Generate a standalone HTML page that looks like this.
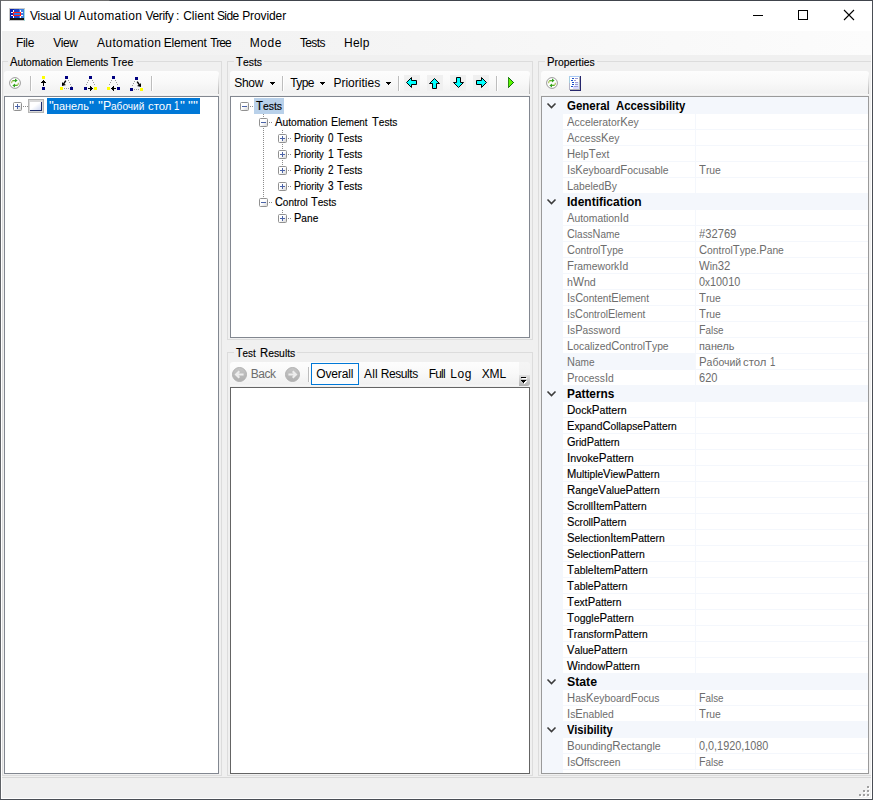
<!DOCTYPE html>
<html lang="en"><head><meta charset="utf-8"><title>Visual UI Automation Verify : Client Side Provider</title>
<style>
html,body{margin:0;padding:0}
body{width:873px;height:800px;overflow:hidden;position:relative;background:#f0f0f0;font-family:"Liberation Sans",sans-serif;font-size:11px;color:#000}
div,span,svg{position:absolute;box-sizing:content-box}
svg{overflow:visible}
.t{white-space:pre;line-height:16px;height:16px;font-size:12px;transform-origin:0 0}
.k{-webkit-text-stroke:0.15px}
.l{left:0;top:0}
.t .c{position:static;font-size:12px}
.gb{border:1px solid #dcdcdc}
.tb{background:linear-gradient(#fdfdfd 0%,#f9f9f9 45%,#f1f1f1 92%,#f8f8f8 100%);border-radius:3px 3px 0 0}
.tbe{width:1px;background:linear-gradient(rgba(176,176,176,0),#b4b4b4)}
.pane{border:1px solid #828790;background:#fff}
.sep{width:1px;height:15px;background:#bdbdbd;box-shadow:1px 0 0 #fff}
.eb{width:7px;height:7px;border:1px solid #919191;border-radius:1.5px;background:linear-gradient(135deg,#fff 45%,#d6d6d6)}
.eb i{position:absolute;left:1px;top:3px;width:5px;height:1px;background:#4b63a7}
.eb b{position:absolute;left:3px;top:1px;width:1px;height:5px;background:#4b63a7}
.hd{height:1px;background:repeating-linear-gradient(to right,#8c8c8c 0 1px,transparent 1px 2px)}
.vd{width:1px;background:repeating-linear-gradient(to bottom,#8c8c8c 0 1px,transparent 1px 2px)}
</style></head>
<body>
<div style="left:0px;top:0px;width:873px;height:800px;background:#f0f0f0"></div>
<div style="left:1px;top:1px;width:871px;height:30px;background:#fff"></div>
<div style="left:1px;top:31px;width:871px;height:24px;background:linear-gradient(to right,#f0f0f0 0%,#f4f4f4 40%,#fcfcfc 100%)"></div>
<div class="gb" style="left:2px;top:61px;width:218px;height:713px"></div>
<div style="left:8px;top:60px;width:128px;height:3px;background:#f0f0f0"></div>
<div class="gb" style="left:227px;top:61px;width:304px;height:277px"></div>
<div style="left:234px;top:60px;width:30px;height:3px;background:#f0f0f0"></div>
<div class="gb" style="left:227px;top:352px;width:304px;height:422px"></div>
<div style="left:234px;top:351px;width:63px;height:3px;background:#f0f0f0"></div>
<div class="gb" style="left:538px;top:61px;width:334px;height:713px"></div>
<div style="left:545px;top:60px;width:52px;height:3px;background:#f0f0f0"></div>
<div style="left:1px;top:777px;width:870px;height:1px;background:#d7d7d7"></div>
<div style="left:1px;top:31px;width:1px;height:768px;background:#fff"></div>
<div style="left:871px;top:31px;width:1px;height:768px;background:#fff"></div>
<div style="left:1px;top:798px;width:871px;height:1px;background:#fff"></div>
<div class="tb" style="left:4px;top:71px;width:215px;height:24px"></div>
<div class="tbe" style="left:218px;top:74px;height:20px"></div>
<div class="tb" style="left:230px;top:71px;width:300px;height:24px"></div>
<div class="tbe" style="left:529px;top:74px;height:20px"></div>
<div class="tb" style="left:230px;top:362px;width:289px;height:24px;border-radius:3px 0 0 0"></div>
<div class="tb" style="left:541px;top:71px;width:328px;height:24px"></div>
<div class="tbe" style="left:868px;top:74px;height:20px"></div>
<div class="pane" style="left:4px;top:96px;width:213px;height:676px;border-color:#828790"></div>
<div class="pane" style="left:230px;top:96px;width:298px;height:240px;border-color:#828790"></div>
<div class="pane" style="left:230px;top:387px;width:298px;height:385px;border-color:#646464"></div>
<div class="pane" style="left:541px;top:96px;width:326px;height:676px;border-color:#9a9a9a"></div>
<div style="left:542px;top:97px;width:326px;height:676px;background:#f4f7fc"></div>
<div style="left:563px;top:114px;width:132px;height:15px;background:#fff"></div>
<div style="left:696px;top:114px;width:172px;height:15px;background:#fff"></div>
<div style="left:563px;top:130px;width:132px;height:15px;background:#fff"></div>
<div style="left:696px;top:130px;width:172px;height:15px;background:#fff"></div>
<div style="left:563px;top:146px;width:132px;height:15px;background:#fff"></div>
<div style="left:696px;top:146px;width:172px;height:15px;background:#fff"></div>
<div style="left:563px;top:162px;width:132px;height:15px;background:#fff"></div>
<div style="left:696px;top:162px;width:172px;height:15px;background:#fff"></div>
<div style="left:563px;top:178px;width:132px;height:15px;background:#fff"></div>
<div style="left:696px;top:178px;width:172px;height:15px;background:#fff"></div>
<div style="left:563px;top:210px;width:132px;height:15px;background:#fff"></div>
<div style="left:696px;top:210px;width:172px;height:15px;background:#fff"></div>
<div style="left:563px;top:226px;width:132px;height:15px;background:#fff"></div>
<div style="left:696px;top:226px;width:172px;height:15px;background:#fff"></div>
<div style="left:563px;top:242px;width:132px;height:15px;background:#fff"></div>
<div style="left:696px;top:242px;width:172px;height:15px;background:#fff"></div>
<div style="left:563px;top:258px;width:132px;height:15px;background:#fff"></div>
<div style="left:696px;top:258px;width:172px;height:15px;background:#fff"></div>
<div style="left:563px;top:274px;width:132px;height:15px;background:#fff"></div>
<div style="left:696px;top:274px;width:172px;height:15px;background:#fff"></div>
<div style="left:563px;top:290px;width:132px;height:15px;background:#fff"></div>
<div style="left:696px;top:290px;width:172px;height:15px;background:#fff"></div>
<div style="left:563px;top:306px;width:132px;height:15px;background:#fff"></div>
<div style="left:696px;top:306px;width:172px;height:15px;background:#fff"></div>
<div style="left:563px;top:322px;width:132px;height:15px;background:#fff"></div>
<div style="left:696px;top:322px;width:172px;height:15px;background:#fff"></div>
<div style="left:563px;top:338px;width:132px;height:15px;background:#fff"></div>
<div style="left:696px;top:338px;width:172px;height:15px;background:#fff"></div>
<div style="left:563px;top:354px;width:132px;height:15px;background:#f4f7fc"></div>
<div style="left:696px;top:354px;width:172px;height:15px;background:#fff"></div>
<div style="left:563px;top:370px;width:132px;height:15px;background:#fff"></div>
<div style="left:696px;top:370px;width:172px;height:15px;background:#fff"></div>
<div style="left:563px;top:402px;width:132px;height:15px;background:#fff"></div>
<div style="left:696px;top:402px;width:172px;height:15px;background:#fff"></div>
<div style="left:563px;top:418px;width:132px;height:15px;background:#fff"></div>
<div style="left:696px;top:418px;width:172px;height:15px;background:#fff"></div>
<div style="left:563px;top:434px;width:132px;height:15px;background:#fff"></div>
<div style="left:696px;top:434px;width:172px;height:15px;background:#fff"></div>
<div style="left:563px;top:450px;width:132px;height:15px;background:#fff"></div>
<div style="left:696px;top:450px;width:172px;height:15px;background:#fff"></div>
<div style="left:563px;top:466px;width:132px;height:15px;background:#fff"></div>
<div style="left:696px;top:466px;width:172px;height:15px;background:#fff"></div>
<div style="left:563px;top:482px;width:132px;height:15px;background:#fff"></div>
<div style="left:696px;top:482px;width:172px;height:15px;background:#fff"></div>
<div style="left:563px;top:498px;width:132px;height:15px;background:#fff"></div>
<div style="left:696px;top:498px;width:172px;height:15px;background:#fff"></div>
<div style="left:563px;top:514px;width:132px;height:15px;background:#fff"></div>
<div style="left:696px;top:514px;width:172px;height:15px;background:#fff"></div>
<div style="left:563px;top:530px;width:132px;height:15px;background:#fff"></div>
<div style="left:696px;top:530px;width:172px;height:15px;background:#fff"></div>
<div style="left:563px;top:546px;width:132px;height:15px;background:#fff"></div>
<div style="left:696px;top:546px;width:172px;height:15px;background:#fff"></div>
<div style="left:563px;top:562px;width:132px;height:15px;background:#fff"></div>
<div style="left:696px;top:562px;width:172px;height:15px;background:#fff"></div>
<div style="left:563px;top:578px;width:132px;height:15px;background:#fff"></div>
<div style="left:696px;top:578px;width:172px;height:15px;background:#fff"></div>
<div style="left:563px;top:594px;width:132px;height:15px;background:#fff"></div>
<div style="left:696px;top:594px;width:172px;height:15px;background:#fff"></div>
<div style="left:563px;top:610px;width:132px;height:15px;background:#fff"></div>
<div style="left:696px;top:610px;width:172px;height:15px;background:#fff"></div>
<div style="left:563px;top:626px;width:132px;height:15px;background:#fff"></div>
<div style="left:696px;top:626px;width:172px;height:15px;background:#fff"></div>
<div style="left:563px;top:642px;width:132px;height:15px;background:#fff"></div>
<div style="left:696px;top:642px;width:172px;height:15px;background:#fff"></div>
<div style="left:563px;top:658px;width:132px;height:15px;background:#fff"></div>
<div style="left:696px;top:658px;width:172px;height:15px;background:#fff"></div>
<div style="left:563px;top:690px;width:132px;height:15px;background:#fff"></div>
<div style="left:696px;top:690px;width:172px;height:15px;background:#fff"></div>
<div style="left:563px;top:706px;width:132px;height:15px;background:#fff"></div>
<div style="left:696px;top:706px;width:172px;height:15px;background:#fff"></div>
<div style="left:563px;top:738px;width:132px;height:15px;background:#fff"></div>
<div style="left:696px;top:738px;width:172px;height:15px;background:#fff"></div>
<div style="left:563px;top:754px;width:132px;height:15px;background:#fff"></div>
<div style="left:696px;top:754px;width:172px;height:15px;background:#fff"></div>
<div style="left:563px;top:770px;width:305px;height:3px;background:#fff"></div>
<svg style="left:546px;top:102px" width="11" height="8" viewBox="0 0 11 8"><path d="M1.5 1.5 L5.5 5.5 L9.5 1.5" fill="none" stroke="#3c3c3c" stroke-width="1.6"/></svg>
<svg style="left:546px;top:198px" width="11" height="8" viewBox="0 0 11 8"><path d="M1.5 1.5 L5.5 5.5 L9.5 1.5" fill="none" stroke="#3c3c3c" stroke-width="1.6"/></svg>
<svg style="left:546px;top:390px" width="11" height="8" viewBox="0 0 11 8"><path d="M1.5 1.5 L5.5 5.5 L9.5 1.5" fill="none" stroke="#3c3c3c" stroke-width="1.6"/></svg>
<svg style="left:546px;top:678px" width="11" height="8" viewBox="0 0 11 8"><path d="M1.5 1.5 L5.5 5.5 L9.5 1.5" fill="none" stroke="#3c3c3c" stroke-width="1.6"/></svg>
<svg style="left:546px;top:726px" width="11" height="8" viewBox="0 0 11 8"><path d="M1.5 1.5 L5.5 5.5 L9.5 1.5" fill="none" stroke="#3c3c3c" stroke-width="1.6"/></svg>
<!-- window border -->
<div style="left:0;top:0;width:873px;height:1px;background:linear-gradient(to right,#707070 0,#6c6c6c 109px,#40444c 110px)"></div>
<div style="left:0;top:0;width:1px;height:800px;background:#5f6267"></div>
<div style="left:872px;top:0;width:1px;height:800px;background:#4a4e55"></div>
<div style="left:0;top:799px;width:873px;height:1px;background:#4a4e55"></div>
<!-- app icon -->
<svg style="left:9px;top:8px" width="16" height="13" viewBox="0 0 16 13" shape-rendering="crispEdges">
<rect x="0" y="0" width="16" height="13" fill="#c9c9c9"/>
<rect x="15" y="1" width="1" height="12" fill="#a5dedb"/>
<rect x="1" y="1" width="14" height="9" fill="#1f45c8"/>
<rect x="1" y="1" width="4" height="9" fill="#0a22a8"/>
<rect x="10" y="1" width="5" height="9" fill="#3f7fe0"/>
<rect x="1" y="10" width="14" height="2" fill="#141414"/>
<rect x="4" y="2" width="1" height="2" fill="#fff"/><rect x="11" y="2" width="1" height="2" fill="#fff"/>
<rect x="4" y="8" width="1" height="2" fill="#fff"/><rect x="11" y="8" width="1" height="2" fill="#fff"/>
<rect x="2" y="4" width="2" height="1" fill="#fff"/><rect x="12" y="4" width="2" height="1" fill="#fff"/>
<rect x="2" y="7" width="2" height="1" fill="#fff"/><rect x="12" y="7" width="2" height="1" fill="#fff"/>
<rect x="4.5" y="4.5" width="7" height="3" fill="#2a78e8" stroke="#ff1f1f" stroke-width="1"/>
</svg>
<!-- caption buttons -->
<div style="left:753px;top:15px;width:10px;height:1px;background:#000"></div>
<div style="left:798px;top:10px;width:8px;height:8px;border:1px solid #000"></div>
<svg style="left:844px;top:10px" width="10" height="10" viewBox="0 0 10 10"><path d="M0 0 L10 10 M10 0 L0 10" stroke="#000" stroke-width="1.1" fill="none"/></svg>
<!-- status grip -->
<svg style="left:859px;top:786px" width="10" height="10" viewBox="0 0 10 10" shape-rendering="crispEdges">
<g fill="#fff"><rect x="9" y="1" width="2" height="2"/><rect x="5" y="5" width="2" height="2"/><rect x="9" y="5" width="2" height="2"/><rect x="1" y="9" width="2" height="2"/><rect x="5" y="9" width="2" height="2"/><rect x="9" y="9" width="2" height="2"/></g>
<g fill="#a0a0a0"><rect x="8" y="0" width="2" height="2"/><rect x="4" y="4" width="2" height="2"/><rect x="8" y="4" width="2" height="2"/><rect x="0" y="8" width="2" height="2"/><rect x="4" y="8" width="2" height="2"/><rect x="8" y="8" width="2" height="2"/></g>
</svg>
<!-- left toolbar -->
<svg style="left:9px;top:77px" width="12" height="12" viewBox="0 0 12 12">
<circle cx="6" cy="6" r="5.4" fill="#fff" stroke="#9a9a9a" stroke-width="1"/>
<path d="M2.7 6.3 Q2.5 3.6 4.6 3.6 L6.2 3.6" fill="none" stroke="#a9c35a" stroke-width="1.2"/>
<path d="M9.3 5.7 Q9.5 8.4 7.4 8.4 L5.8 8.4" fill="none" stroke="#a9c35a" stroke-width="1.2"/>
<path d="M3.6 3.6 L6.2 3.6" fill="none" stroke="#55b02a" stroke-width="1.2"/>
<path d="M8.4 8.4 L5.8 8.4" fill="none" stroke="#55b02a" stroke-width="1.2"/>
<path d="M6 1.6 L8.6 3.6 L6 5.6 Z" fill="#2fa31c"/>
<path d="M6 6.4 L3.4 8.4 L6 10.4 Z" fill="#2fa31c"/>
</svg>
<div class="sep" style="left:30px;top:76px"></div>
<svg style="left:36px;top:75px" width="16" height="16" viewBox="0 0 16 16" shape-rendering="crispEdges">
<rect x="6" y="1" width="3" height="3" fill="#ffff00"/><rect x="6" y="12" width="3" height="3" fill="#000080"/>
<rect x="7" y="5" width="1" height="6" fill="#000"/><rect x="6" y="6" width="3" height="1" fill="#000"/><rect x="5" y="7" width="5" height="1" fill="#000"/>
</svg>
<svg style="left:59px;top:75px" width="16" height="16" viewBox="0 0 16 16" shape-rendering="crispEdges">
<rect x="6" y="1" width="3" height="3" fill="#000080"/><rect x="1" y="12" width="3" height="3" fill="#ffff00"/><rect x="11" y="12" width="3" height="3" fill="#000080"/>
<g fill="#9c9c9c"><rect x="9" y="5" width="1" height="1"/><rect x="10" y="7" width="1" height="1"/><rect x="11" y="9" width="1" height="1"/><rect x="12" y="11" width="1" height="1"/><rect x="5" y="13" width="1" height="1"/><rect x="7" y="13" width="1" height="1"/><rect x="9" y="13" width="1" height="1"/></g>
<path d="M3 11 L3 7 L4.2 8.2 L6.2 5.2 L7.4 6 L5.4 9 L7 10 Z" fill="#000" shape-rendering="auto"/>
</svg>
<svg style="left:83px;top:75px" width="16" height="16" viewBox="0 0 16 16" shape-rendering="crispEdges">
<rect x="6" y="1" width="3" height="3" fill="#000080"/><rect x="1" y="12" width="3" height="3" fill="#000080"/><rect x="11" y="12" width="3" height="3" fill="#ffff00"/>
<g fill="#9c9c9c"><rect x="5" y="5" width="1" height="1"/><rect x="4" y="7" width="1" height="1"/><rect x="3" y="9" width="1" height="1"/><rect x="9" y="5" width="1" height="1"/><rect x="10" y="7" width="1" height="1"/><rect x="11" y="9" width="1" height="1"/></g>
<rect x="5" y="13" width="5" height="1" fill="#000"/><rect x="8" y="12" width="1" height="3" fill="#000"/><rect x="7" y="11" width="1" height="5" fill="#000"/>
</svg>
<svg style="left:106px;top:75px" width="16" height="16" viewBox="0 0 16 16" shape-rendering="crispEdges">
<rect x="6" y="1" width="3" height="3" fill="#000080"/><rect x="1" y="12" width="3" height="3" fill="#ffff00"/><rect x="11" y="12" width="3" height="3" fill="#000080"/>
<g fill="#9c9c9c"><rect x="5" y="5" width="1" height="1"/><rect x="4" y="7" width="1" height="1"/><rect x="3" y="9" width="1" height="1"/><rect x="9" y="5" width="1" height="1"/><rect x="10" y="7" width="1" height="1"/><rect x="11" y="9" width="1" height="1"/></g>
<rect x="5" y="13" width="5" height="1" fill="#000"/><rect x="6" y="12" width="1" height="3" fill="#000"/><rect x="7" y="11" width="1" height="5" fill="#000"/>
</svg>
<svg style="left:129px;top:76px" width="16" height="16" viewBox="0 0 16 16" shape-rendering="crispEdges">
<rect x="6" y="1" width="3" height="3" fill="#000080"/><rect x="1" y="12" width="3" height="3" fill="#000080"/><rect x="11" y="12" width="3" height="3" fill="#ffff00"/>
<g fill="#9c9c9c"><rect x="5" y="5" width="1" height="1"/><rect x="4" y="7" width="1" height="1"/><rect x="3" y="9" width="1" height="1"/><rect x="5" y="13" width="1" height="1"/><rect x="7" y="13" width="1" height="1"/><rect x="9" y="13" width="1" height="1"/></g>
<path d="M12 11 L12 7 L10.8 8.2 L8.8 5.2 L7.6 6 L9.6 9 L8 10 Z" fill="#000" shape-rendering="auto"/>
</svg>
<div class="sep" style="left:151px;top:76px"></div>
<!-- left tree row -->
<div style="left:47px;top:98px;width:153px;height:16px;background:#0078d7"></div>
<div class="eb" style="left:13px;top:102px"><i></i><b></b></div>
<div class="hd" style="left:23px;top:106px;width:5px"></div>
<svg style="left:28px;top:99px" width="16" height="14" viewBox="0 0 16 14" shape-rendering="crispEdges">
<rect x="0" y="0" width="16" height="14" fill="#b4b4b4"/><rect x="1" y="1" width="14" height="12" fill="#d9d9d9"/>
<rect x="2" y="3" width="12" height="9" fill="#1b2a6b"/>
<defs><linearGradient id="scr" x1="0" y1="0" x2="1" y2="1"><stop offset="0.45" stop-color="#fff"/><stop offset="1" stop-color="#cfd8f0"/></linearGradient></defs>
<rect x="2" y="3" width="11" height="8" fill="url(#scr)" shape-rendering="auto"/>
</svg>
<!-- tests toolbar -->
<svg style="left:270px;top:82px" width="5" height="3" viewBox="0 0 5 3" shape-rendering="crispEdges"><rect x="0" y="0" width="5" height="1"/><rect x="1" y="1" width="3" height="1"/><rect x="2" y="2" width="1" height="1"/></svg>
<div class="sep" style="left:282px;top:76px"></div>
<svg style="left:320px;top:82px" width="5" height="3" viewBox="0 0 5 3" shape-rendering="crispEdges"><rect x="0" y="0" width="5" height="1"/><rect x="1" y="1" width="3" height="1"/><rect x="2" y="2" width="1" height="1"/></svg>
<svg style="left:386px;top:82px" width="5" height="3" viewBox="0 0 5 3" shape-rendering="crispEdges"><rect x="0" y="0" width="5" height="1"/><rect x="1" y="1" width="3" height="1"/><rect x="2" y="2" width="1" height="1"/></svg>
<div class="sep" style="left:398px;top:76px"></div>
<div style="left:404px;top:75px;width:16px;height:16px;background:#f0f0f0"></div>
<div style="left:427px;top:75px;width:16px;height:16px;background:#f0f0f0"></div>
<div style="left:450px;top:75px;width:16px;height:16px;background:#f0f0f0"></div>
<div style="left:473px;top:75px;width:16px;height:16px;background:#f0f0f0"></div>
<svg style="left:404px;top:75px" width="16" height="16" viewBox="0 0 16 16"><path d="M2.5 7.5 L7.5 2.5 L7.5 5.5 L12.5 5.5 L12.5 9.5 L7.5 9.5 L7.5 12.5 Z" fill="#00ffff" stroke="#000" stroke-width="1"/></svg>
<svg style="left:427px;top:75px" width="16" height="16" viewBox="0 0 16 16"><path d="M7.5 3.5 L12.5 8.5 L9.5 8.5 L9.5 13.5 L5.5 13.5 L5.5 8.5 L2.5 8.5 Z" fill="#00ffff" stroke="#000" stroke-width="1"/></svg>
<svg style="left:450px;top:75px" width="16" height="16" viewBox="0 0 16 16"><path d="M8.5 12.5 L13.5 7.5 L10.5 7.5 L10.5 2.5 L6.5 2.5 L6.5 7.5 L3.5 7.5 Z" fill="#00ffff" stroke="#000" stroke-width="1"/></svg>
<svg style="left:473px;top:75px" width="16" height="16" viewBox="0 0 16 16"><path d="M13.5 7.5 L8.5 2.5 L8.5 5.5 L3.5 5.5 L3.5 9.5 L8.5 9.5 L8.5 12.5 Z" fill="#00ffff" stroke="#000" stroke-width="1"/></svg>
<div class="sep" style="left:496px;top:76px"></div>
<svg style="left:508px;top:77px" width="6" height="11" viewBox="0 0 6 11" shape-rendering="crispEdges"><rect x="0" y="0" width="1" height="1" fill="#2d8c14"/><rect x="0" y="1" width="1" height="1" fill="#2d8c14"/><rect x="1" y="1" width="1" height="1" fill="#0f6e0f"/><rect x="1" y="2" width="1" height="1" fill="#5cf800"/><rect x="0" y="2" width="1" height="1" fill="#2d8c14"/><rect x="2" y="2" width="1" height="1" fill="#0f6e0f"/><rect x="1" y="3" width="2" height="1" fill="#5cf800"/><rect x="0" y="3" width="1" height="1" fill="#2d8c14"/><rect x="3" y="3" width="1" height="1" fill="#0f6e0f"/><rect x="1" y="4" width="3" height="1" fill="#5cf800"/><rect x="0" y="4" width="1" height="1" fill="#2d8c14"/><rect x="4" y="4" width="1" height="1" fill="#0f6e0f"/><rect x="1" y="5" width="4" height="1" fill="#5cf800"/><rect x="0" y="5" width="1" height="1" fill="#2d8c14"/><rect x="5" y="5" width="1" height="1" fill="#0f6e0f"/><rect x="1" y="6" width="3" height="1" fill="#5cf800"/><rect x="0" y="6" width="1" height="1" fill="#2d8c14"/><rect x="4" y="6" width="1" height="1" fill="#0f6e0f"/><rect x="1" y="7" width="2" height="1" fill="#5cf800"/><rect x="0" y="7" width="1" height="1" fill="#2d8c14"/><rect x="3" y="7" width="1" height="1" fill="#0f6e0f"/><rect x="1" y="8" width="1" height="1" fill="#5cf800"/><rect x="0" y="8" width="1" height="1" fill="#2d8c14"/><rect x="2" y="8" width="1" height="1" fill="#0f6e0f"/><rect x="0" y="9" width="1" height="1" fill="#2d8c14"/><rect x="1" y="9" width="1" height="1" fill="#0f6e0f"/><rect x="0" y="10" width="1" height="1" fill="#2d8c14"/></svg>
<!-- properties toolbar -->
<svg style="left:546px;top:77px" width="12" height="12" viewBox="0 0 12 12">
<circle cx="6" cy="6" r="5.4" fill="#fff" stroke="#9a9a9a" stroke-width="1"/>
<path d="M2.7 6.3 Q2.5 3.6 4.6 3.6 L6.2 3.6" fill="none" stroke="#a9c35a" stroke-width="1.2"/>
<path d="M9.3 5.7 Q9.5 8.4 7.4 8.4 L5.8 8.4" fill="none" stroke="#a9c35a" stroke-width="1.2"/>
<path d="M3.6 3.6 L6.2 3.6" fill="none" stroke="#55b02a" stroke-width="1.2"/>
<path d="M8.4 8.4 L5.8 8.4" fill="none" stroke="#55b02a" stroke-width="1.2"/>
<path d="M6 1.6 L8.6 3.6 L6 5.6 Z" fill="#2fa31c"/>
<path d="M6 6.4 L3.4 8.4 L6 10.4 Z" fill="#2fa31c"/>
</svg>
<svg style="left:569px;top:76px" width="12" height="15" viewBox="0 0 12 15" shape-rendering="crispEdges">
<rect x="1" y="1" width="9" height="12" fill="#fff"/>
<rect x="0" y="0" width="11" height="1" fill="#a9c9f2"/>
<rect x="0" y="1" width="1" height="6" fill="#a6cfe0"/><rect x="0" y="7" width="1" height="7" fill="#b4b4c8"/>
<rect x="4" y="10" width="6" height="3" fill="#d9dcff"/><rect x="6" y="6" width="4" height="4" fill="#e4f0ff"/>
<rect x="10" y="1" width="1" height="13" fill="#b4b4b4"/><rect x="1" y="13" width="9" height="1" fill="#b4b4b4"/>
<rect x="11" y="0" width="1" height="15" fill="#26266c"/><rect x="1" y="14" width="11" height="1" fill="#26266c"/>
<g fill="#1c50c8"><rect x="3" y="2" width="2" height="1"/><rect x="2" y="4" width="2" height="1"/><rect x="3" y="6" width="2" height="1"/><rect x="3" y="8" width="2" height="1"/><rect x="2" y="10" width="2" height="1"/></g>
<g fill="#9d9ad6"><rect x="6" y="2" width="3" height="1"/><rect x="5" y="4" width="2" height="1"/><rect x="6" y="6" width="3" height="1"/><rect x="6" y="8" width="3" height="1"/><rect x="5" y="10" width="4" height="1"/></g>
</svg>
<!-- tests tree -->
<div style="left:254px;top:98px;width:30px;height:16px;background:#b9d1ea"></div>
<div class="vd" style="left:263px;top:114px;height:84px"></div>
<div class="vd" style="left:282px;top:130px;height:36px"></div>
<div class="vd" style="left:282px;top:210px;height:4px"></div>
<div class="eb" style="left:240px;top:102px"><i></i></div><div class="hd" style="left:250px;top:106px;width:4px"></div>
<div class="eb" style="left:259px;top:118px"><i></i></div><div class="hd" style="left:269px;top:122px;width:4px"></div>
<div class="eb" style="left:278px;top:134px"><i></i><b></b></div><div class="hd" style="left:288px;top:138px;width:4px"></div>
<div class="eb" style="left:278px;top:150px"><i></i><b></b></div><div class="hd" style="left:288px;top:154px;width:4px"></div>
<div class="eb" style="left:278px;top:166px"><i></i><b></b></div><div class="hd" style="left:288px;top:170px;width:4px"></div>
<div class="eb" style="left:278px;top:182px"><i></i><b></b></div><div class="hd" style="left:288px;top:186px;width:4px"></div>
<div class="eb" style="left:259px;top:198px"><i></i></div><div class="hd" style="left:269px;top:202px;width:4px"></div>
<div class="eb" style="left:278px;top:214px"><i></i><b></b></div><div class="hd" style="left:288px;top:218px;width:4px"></div>
<!-- results toolbar -->
<svg width="0" height="0" style="left:0;top:0"><defs><linearGradient id="bk" x1="0" y1="0" x2="0" y2="1"><stop offset="0" stop-color="#c6c6c6"/><stop offset="1" stop-color="#b0b0b0"/></linearGradient></defs></svg>
<svg style="left:232px;top:367px" width="15" height="15" viewBox="0 0 15 15"><circle cx="7.5" cy="7.5" r="7" fill="url(#bk)" stroke="#b2b2b2" stroke-width="1"/><path d="M11.6 7.5 L4.4 7.5 M7.3 4.2 L4 7.5 L7.3 10.8" fill="none" stroke="#ededed" stroke-width="2.1"/></svg>
<svg style="left:285px;top:367px" width="15" height="15" viewBox="0 0 15 15"><circle cx="7.5" cy="7.5" r="7" fill="url(#bk)" stroke="#b2b2b2" stroke-width="1"/><path d="M3.4 7.5 L10.6 7.5 M7.7 4.2 L11 7.5 L7.7 10.8" fill="none" stroke="#ededed" stroke-width="2.1"/></svg>
<div class="sep" style="left:308px;top:367px"></div>
<div style="left:311px;top:363px;width:46px;height:20px;border:1px solid #0078d7;background:#fdfdfd"></div>
<div style="left:519px;top:362px;width:11px;height:24px;border-radius:0 3px 3px 0;background:linear-gradient(#f5f5f5 0,#f2f2f2 13px,#e2e2e2 13px,#cfcfcf 17px,#b2b2b2 24px)"></div>
<svg style="left:521px;top:377px" width="6" height="7" viewBox="0 0 6 7" shape-rendering="crispEdges"><g fill="#fff"><rect x="1" y="1" width="5" height="1"/><rect x="1" y="4" width="5" height="1"/><rect x="2" y="5" width="3" height="1"/><rect x="3" y="6" width="1" height="1"/></g><rect x="0" y="0" width="5" height="1"/><rect x="0" y="3" width="5" height="1"/><rect x="1" y="4" width="3" height="1"/><rect x="2" y="5" width="1" height="1"/></svg>

<div class="l"><span class="t" style="left:30.1px;top:8px;letter-spacing:-0.31px">Visual</span> <span class="t" style="left:63.9px;top:8px;letter-spacing:-0.20px">UI</span> <span class="t" style="left:78.3px;top:8px;letter-spacing:0.32px">Automation</span> <span class="t" style="left:145.4px;top:8px;letter-spacing:-0.33px">Verify</span> <span class="t" style="left:176.0px;top:8px">:</span> <span class="t" style="left:183.2px;top:8px;letter-spacing:0.02px">Client</span> <span class="t" style="left:216.9px;top:8px;letter-spacing:-0.58px">Side</span> <span class="t" style="left:242.2px;top:8px;letter-spacing:-0.10px">Provider</span></div>
<span class="t" style="left:16.0px;top:35px;letter-spacing:-0.32px">File</span>
<span class="t" style="left:53.3px;top:35px;letter-spacing:-0.42px">View</span>
<div class="l"><span class="t" style="left:97.0px;top:35px;letter-spacing:0.36px">Automation</span> <span class="t" style="left:163.7px;top:35px;letter-spacing:-0.15px">Element</span> <span class="t" style="left:210.2px;top:35px;letter-spacing:-0.93px">Tree</span></div>
<span class="t" style="left:249.8px;top:35px;letter-spacing:0.53px">Mode</span>
<span class="t" style="left:299.9px;top:35px;letter-spacing:-0.61px">Tests</span>
<span class="t" style="left:344.0px;top:35px;letter-spacing:0.25px">Help</span>
<div class="l"><span class="t k" style="left:10.0px;top:54px;transform:scaleX(0.933);font-size:11px"><span class="c">A</span>utomation</span> <span class="t k" style="left:65.8px;top:54px;transform:scaleX(0.909);font-size:11px"><span class="c">E</span>lements</span> <span class="t k" style="left:111.4px;top:54px;transform:scaleX(0.964);font-size:11px"><span class="c">T</span>ree</span></div>
<span class="t k" style="left:236.3px;top:54px;transform:scaleX(0.944);font-size:11px"><span class="c">T</span>ests</span>
<span class="t k" style="left:546.6px;top:54px;transform:scaleX(0.938);font-size:11px"><span class="c">P</span>roperties</span>
<div class="l"><span class="t k" style="left:236.2px;top:345px;transform:scaleX(0.897);font-size:11px"><span class="c">T</span>est</span> <span class="t k" style="left:259.6px;top:345px;transform:scaleX(0.942);font-size:11px"><span class="c">R</span>esults</span></div>
<div class="l"><span class="t" style="left:49.1px;top:98px;transform:scaleX(1.108);color:#fff">"</span><span class="t" style="left:53.4px;top:98px;transform:scaleX(0.994);font-size:11px;color:#fff">панель</span><span class="t" style="left:89.4px;top:98px;transform:scaleX(1.150);color:#fff">"</span> <span class="t" style="left:98.4px;top:98px;transform:scaleX(1.138);color:#fff">"</span><span class="t" style="left:103.0px;top:98px;transform:scaleX(1.031);color:#fff">Р</span><span class="t" style="left:111.4px;top:98px;transform:scaleX(0.917);font-size:11px;color:#fff">абочий</span> <span class="t" style="left:147.5px;top:98px;transform:scaleX(1.033);font-size:11px;color:#fff">стол</span> <span class="t" style="left:174.4px;top:98px;transform:scaleX(0.800);color:#fff">1</span><span class="t" style="left:180.1px;top:98px;transform:scaleX(1.138);color:#fff">"</span> <span class="t" style="left:188.2px;top:98px;transform:scaleX(1.150);color:#fff">""</span></div>
<span class="t" style="left:234.2px;top:75px;letter-spacing:-0.25px">Show</span>
<span class="t" style="left:290.2px;top:75px;letter-spacing:-0.58px">Type</span>
<span class="t" style="left:333.4px;top:75px;letter-spacing:0.01px">Priorities</span>
<span class="t k" style="left:256.0px;top:98px;transform:scaleX(0.947);font-size:11px"><span class="c">T</span>ests</span>
<div class="l"><span class="t k" style="left:275.0px;top:114px;transform:scaleX(0.933);font-size:11px"><span class="c">A</span>utomation</span> <span class="t k" style="left:330.8px;top:114px;transform:scaleX(0.890);font-size:11px"><span class="c">E</span>lement</span> <span class="t k" style="left:372.4px;top:114px;transform:scaleX(0.922);font-size:11px"><span class="c">T</span>ests</span></div>
<div class="l"><span class="t k" style="left:294.0px;top:130px;transform:scaleX(0.854);font-size:11px"><span class="c">P</span>riority</span> <span class="t k" style="left:328.2px;top:130px;transform:scaleX(0.819)">0</span> <span class="t k" style="left:337.2px;top:130px;transform:scaleX(0.919);font-size:11px"><span class="c">T</span>ests</span></div>
<div class="l"><span class="t k" style="left:294.0px;top:146px;transform:scaleX(0.854);font-size:11px"><span class="c">P</span>riority</span> <span class="t k" style="left:327.5px;top:146px;transform:scaleX(0.857)">1</span> <span class="t k" style="left:337.2px;top:146px;transform:scaleX(0.919);font-size:11px"><span class="c">T</span>ests</span></div>
<div class="l"><span class="t k" style="left:294.0px;top:162px;transform:scaleX(0.854);font-size:11px"><span class="c">P</span>riority</span> <span class="t k" style="left:328.2px;top:162px;transform:scaleX(0.824)">2</span> <span class="t k" style="left:337.2px;top:162px;transform:scaleX(0.919);font-size:11px"><span class="c">T</span>ests</span></div>
<div class="l"><span class="t k" style="left:294.0px;top:178px;transform:scaleX(0.854);font-size:11px"><span class="c">P</span>riority</span> <span class="t k" style="left:328.1px;top:178px;transform:scaleX(0.835)">3</span> <span class="t k" style="left:337.2px;top:178px;transform:scaleX(0.919);font-size:11px"><span class="c">T</span>ests</span></div>
<div class="l"><span class="t k" style="left:275.0px;top:194px;transform:scaleX(0.907);font-size:11px"><span class="c">C</span>ontrol</span> <span class="t k" style="left:311.2px;top:194px;transform:scaleX(0.919);font-size:11px"><span class="c">T</span>ests</span></div>
<span class="t k" style="left:294.0px;top:210px;transform:scaleX(0.920);font-size:11px"><span class="c">P</span>ane</span>
<span class="t" style="left:250.8px;top:366px;letter-spacing:-0.49px;color:#6d6d6d">Back</span>
<span class="t" style="left:316.2px;top:366px;letter-spacing:-0.14px">Overall</span>
<div class="l"><span class="t" style="left:364.1px;top:366px;letter-spacing:0.10px">All</span> <span class="t" style="left:380.8px;top:366px;letter-spacing:-0.43px">Results</span></div>
<div class="l"><span class="t" style="left:428.8px;top:366px;letter-spacing:-0.85px">Full</span> <span class="t" style="left:450.3px;top:366px;letter-spacing:0.59px">Log</span></div>
<span class="t" style="left:481.7px;top:366px;letter-spacing:-0.07px">XML</span>
<div class="l"><span class="t" style="left:567.0px;top:98px;transform:scaleX(0.956);font-weight:700">General</span> <span class="t" style="left:615.9px;top:98px;transform:scaleX(0.944);font-weight:700">Accessibility</span></div>
<span class="t" style="left:567.0px;top:114px;transform:scaleX(0.944);font-size:11px;color:#6d6d6d"><span class="c">A</span>ccelerator<span class="c">K</span>ey</span>
<span class="t" style="left:567.0px;top:130px;transform:scaleX(0.940);font-size:11px;color:#6d6d6d"><span class="c">A</span>ccess<span class="c">K</span>ey</span>
<span class="t" style="left:567.0px;top:146px;transform:scaleX(0.933);font-size:11px;color:#6d6d6d"><span class="c">H</span>elp<span class="c">T</span>ext</span>
<span class="t" style="left:567.0px;top:162px;transform:scaleX(0.941);font-size:11px;color:#6d6d6d"><span class="c">I</span>s<span class="c">K</span>eyboard<span class="c">F</span>ocusable</span>
<span class="t" style="left:699.0px;top:162px;transform:scaleX(0.941);font-size:11px;color:#6d6d6d"><span class="c">T</span>rue</span>
<span class="t" style="left:567.0px;top:178px;transform:scaleX(0.936);font-size:11px;color:#6d6d6d"><span class="c">L</span>abeled<span class="c">B</span>y</span>
<span class="t" style="left:567.0px;top:194px;transform:scaleX(1.000);font-weight:700">Identification</span>
<span class="t" style="left:567.0px;top:210px;transform:scaleX(0.938);font-size:11px;color:#6d6d6d"><span class="c">A</span>utomation<span class="c">I</span>d</span>
<span class="t" style="left:567.0px;top:226px;transform:scaleX(0.907);font-size:11px;color:#6d6d6d"><span class="c">C</span>lass<span class="c">N</span>ame</span>
<span class="t" style="left:699.0px;top:226px;transform:scaleX(0.932);color:#6d6d6d">#32769</span>
<span class="t" style="left:567.0px;top:242px;transform:scaleX(0.921);font-size:11px;color:#6d6d6d"><span class="c">C</span>ontrol<span class="c">T</span>ype</span>
<span class="t" style="left:699.0px;top:242px;transform:scaleX(0.935);font-size:11px;color:#6d6d6d"><span class="c">C</span>ontrol<span class="c">T</span>ype.<span class="c">P</span>ane</span>
<span class="t" style="left:567.0px;top:258px;transform:scaleX(0.939);font-size:11px;color:#6d6d6d"><span class="c">F</span>ramework<span class="c">I</span>d</span>
<span class="t" style="left:699.0px;top:258px;transform:scaleX(0.944);font-size:11px;color:#6d6d6d"><span class="c">W</span>in<span class="c">32</span></span>
<span class="t" style="left:567.0px;top:274px;transform:scaleX(0.970);font-size:11px;color:#6d6d6d">h<span class="c">W</span>nd</span>
<span class="t" style="left:699.0px;top:274px;transform:scaleX(0.905);font-size:11px;color:#6d6d6d"><span class="c">0</span>x<span class="c">10010</span></span>
<span class="t" style="left:567.0px;top:290px;transform:scaleX(0.920);font-size:11px;color:#6d6d6d"><span class="c">I</span>s<span class="c">C</span>ontent<span class="c">E</span>lement</span>
<span class="t" style="left:699.0px;top:290px;transform:scaleX(0.941);font-size:11px;color:#6d6d6d"><span class="c">T</span>rue</span>
<span class="t" style="left:567.0px;top:306px;transform:scaleX(0.909);font-size:11px;color:#6d6d6d"><span class="c">I</span>s<span class="c">C</span>ontrol<span class="c">E</span>lement</span>
<span class="t" style="left:699.0px;top:306px;transform:scaleX(0.941);font-size:11px;color:#6d6d6d"><span class="c">T</span>rue</span>
<span class="t" style="left:567.0px;top:322px;transform:scaleX(0.925);font-size:11px;color:#6d6d6d"><span class="c">I</span>s<span class="c">P</span>assword</span>
<span class="t" style="left:699.0px;top:322px;transform:scaleX(0.893);font-size:11px;color:#6d6d6d"><span class="c">F</span>alse</span>
<span class="t" style="left:567.0px;top:338px;transform:scaleX(0.938);font-size:11px;color:#6d6d6d"><span class="c">L</span>ocalized<span class="c">C</span>ontrol<span class="c">T</span>ype</span>
<span class="t" style="left:699.0px;top:338px;transform:scaleX(0.984);font-size:11px;color:#6d6d6d">панель</span>
<span class="t" style="left:567.0px;top:354px;transform:scaleX(0.915);font-size:11px;color:#6d6d6d"><span class="c">N</span>ame</span>
<div class="l"><span class="t" style="left:698.8px;top:354px;transform:scaleX(0.950);font-size:11px;color:#6d6d6d"><span class="c">Р</span>абочий</span> <span class="t" style="left:743.3px;top:354px;transform:scaleX(1.028);font-size:11px;color:#6d6d6d">стол</span> <span class="t" style="left:770.2px;top:354px;transform:scaleX(0.800);color:#6d6d6d">1</span></div>
<span class="t" style="left:567.0px;top:370px;transform:scaleX(0.938);font-size:11px;color:#6d6d6d"><span class="c">P</span>rocess<span class="c">I</span>d</span>
<span class="t" style="left:699.0px;top:370px;transform:scaleX(0.921);color:#6d6d6d">620</span>
<span class="t" style="left:567.0px;top:386px;transform:scaleX(0.985);font-weight:700">Patterns</span>
<span class="t k" style="left:567.0px;top:402px;transform:scaleX(0.962);font-size:11px"><span class="c">D</span>ock<span class="c">P</span>attern</span>
<span class="t k" style="left:567.0px;top:418px;transform:scaleX(0.933);font-size:11px"><span class="c">E</span>xpand<span class="c">C</span>ollapse<span class="c">P</span>attern</span>
<span class="t k" style="left:567.0px;top:434px;transform:scaleX(0.913);font-size:11px"><span class="c">G</span>rid<span class="c">P</span>attern</span>
<span class="t k" style="left:567.0px;top:450px;transform:scaleX(0.970);font-size:11px"><span class="c">I</span>nvoke<span class="c">P</span>attern</span>
<span class="t k" style="left:567.0px;top:466px;transform:scaleX(0.932);font-size:11px"><span class="c">M</span>ultiple<span class="c">V</span>iew<span class="c">P</span>attern</span>
<span class="t k" style="left:567.0px;top:482px;transform:scaleX(0.946);font-size:11px"><span class="c">R</span>ange<span class="c">V</span>alue<span class="c">P</span>attern</span>
<span class="t k" style="left:567.0px;top:498px;transform:scaleX(0.926);font-size:11px"><span class="c">S</span>croll<span class="c">I</span>tem<span class="c">P</span>attern</span>
<span class="t k" style="left:567.0px;top:514px;transform:scaleX(0.925);font-size:11px"><span class="c">S</span>croll<span class="c">P</span>attern</span>
<span class="t k" style="left:567.0px;top:530px;transform:scaleX(0.941);font-size:11px"><span class="c">S</span>election<span class="c">I</span>tem<span class="c">P</span>attern</span>
<span class="t k" style="left:567.0px;top:546px;transform:scaleX(0.947);font-size:11px"><span class="c">S</span>election<span class="c">P</span>attern</span>
<span class="t k" style="left:567.0px;top:562px;transform:scaleX(0.939);font-size:11px"><span class="c">T</span>able<span class="c">I</span>tem<span class="c">P</span>attern</span>
<span class="t k" style="left:567.0px;top:578px;transform:scaleX(0.941);font-size:11px"><span class="c">T</span>able<span class="c">P</span>attern</span>
<span class="t k" style="left:567.0px;top:594px;transform:scaleX(0.937);font-size:11px"><span class="c">T</span>ext<span class="c">P</span>attern</span>
<span class="t k" style="left:567.0px;top:610px;transform:scaleX(0.947);font-size:11px"><span class="c">T</span>oggle<span class="c">P</span>attern</span>
<span class="t k" style="left:567.0px;top:626px;transform:scaleX(0.929);font-size:11px"><span class="c">T</span>ransform<span class="c">P</span>attern</span>
<span class="t k" style="left:567.0px;top:642px;transform:scaleX(0.930);font-size:11px"><span class="c">V</span>alue<span class="c">P</span>attern</span>
<span class="t k" style="left:567.0px;top:658px;transform:scaleX(0.954);font-size:11px"><span class="c">W</span>indow<span class="c">P</span>attern</span>
<span class="t" style="left:567.0px;top:674px;transform:scaleX(1.024);font-weight:700">State</span>
<span class="t" style="left:567.0px;top:690px;transform:scaleX(0.937);font-size:11px;color:#6d6d6d"><span class="c">H</span>as<span class="c">K</span>eyboard<span class="c">F</span>ocus</span>
<span class="t" style="left:699.0px;top:690px;transform:scaleX(0.893);font-size:11px;color:#6d6d6d"><span class="c">F</span>alse</span>
<span class="t" style="left:567.0px;top:706px;transform:scaleX(0.938);font-size:11px;color:#6d6d6d"><span class="c">I</span>s<span class="c">E</span>nabled</span>
<span class="t" style="left:699.0px;top:706px;transform:scaleX(0.941);font-size:11px;color:#6d6d6d"><span class="c">T</span>rue</span>
<span class="t" style="left:567.0px;top:722px;transform:scaleX(0.931);font-weight:700">Visibility</span>
<span class="t" style="left:567.0px;top:738px;transform:scaleX(0.961);font-size:11px;color:#6d6d6d"><span class="c">B</span>ounding<span class="c">R</span>ectangle</span>
<span class="t" style="left:699.0px;top:738px;transform:scaleX(0.904);color:#6d6d6d">0,0,1920,1080</span>
<span class="t" style="left:567.0px;top:754px;transform:scaleX(0.938);font-size:11px;color:#6d6d6d"><span class="c">I</span>s<span class="c">O</span>ffscreen</span>
<span class="t" style="left:699.0px;top:754px;transform:scaleX(0.893);font-size:11px;color:#6d6d6d"><span class="c">F</span>alse</span>
</body></html>
